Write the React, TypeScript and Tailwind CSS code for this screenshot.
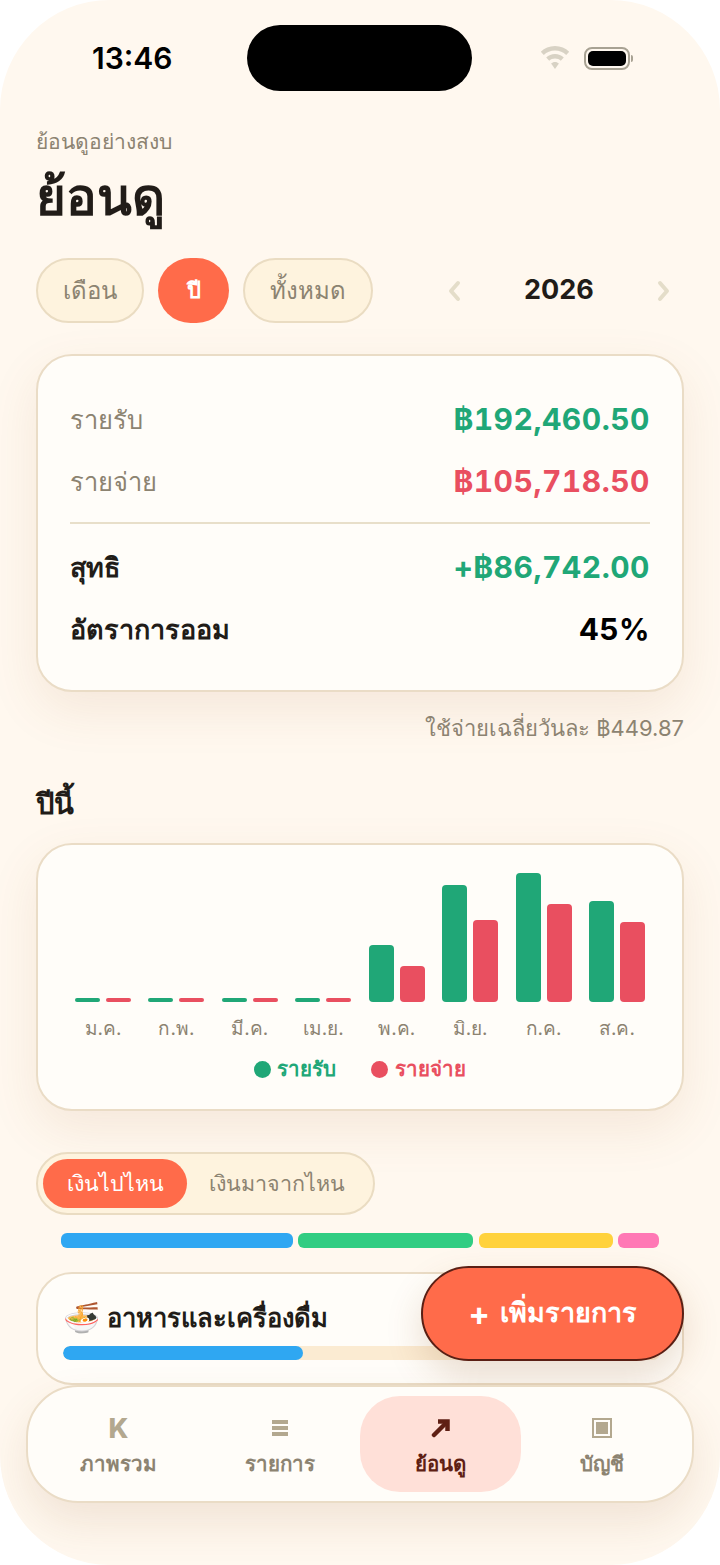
const months = [
  { label: 'ม.ค.', income: 4, expense: 4 },
  { label: 'ก.พ.', income: 4, expense: 4 },
  { label: 'มี.ค.', income: 4, expense: 4 },
  { label: 'เม.ย.', income: 4, expense: 4 },
  { label: 'พ.ค.', income: 57, expense: 36 },
  { label: 'มิ.ย.', income: 117, expense: 82 },
  { label: 'ก.ค.', income: 129, expense: 98 },
  { label: 'ส.ค.', income: 101, expense: 80 },
]

function StatusBar() {
  return (
    <div className="flex h-[131px] items-start justify-between pl-[92px] pr-[87px] pt-[25px]">
      <span className="mt-[15px] text-[30px] leading-[36px] font-semibold text-black">13:46</span>
      <div className="ml-[7px] h-[66px] w-[225px] rounded-[33px] bg-black" />
      <div className="mt-[21px] flex items-center gap-[14px]">
        <svg width="30" height="24" viewBox="0 0 30 24" fill="#d8d2c4">
          <path d="M15 0C9.4 0 4.4 2.2.8 5.7l3 3.2C6.700 6.100 10.600 4.400 15 4.400s8.300 1.700 11.200 4.500l3-3.200C25.600 2.200 20.600 0 15 0z" />
          <path d="M15 8c-3.400 0-6.500 1.300-8.800 3.500l3 3.200C10.700 13.300 12.700 12.400 15 12.400s4.300.9 5.800 2.300l3-3.200C21.500 9.300 18.400 8 15 8z" />
          <path d="M15 16c-1.500 0-2.900.6-3.900 1.600L15 23l3.900-5.400C17.900 16.600 16.500 16 15 16z" />
        </svg>
        <div className="flex items-center gap-[1px]">
          <div className="flex h-[23px] w-[46px] items-center justify-center rounded-[8px] border-2 border-[#a8a293]">
            <div className="h-[15px] w-[38px] rounded-[5px] bg-black" />
          </div>
          <div className="h-[7px] w-[2px] rounded-r-sm bg-[#a8a293]" />
        </div>
      </div>
    </div>
  )
}

function Chip({ label, active }: { label: string; active?: boolean }) {
  return (
    <div
      className={
        active
          ? 'flex h-[65px] w-[71px] items-center justify-center rounded-[33px] bg-[#ff6b4a] text-[22px] font-semibold text-white'
          : 'flex h-[65px] items-center rounded-[33px] border-2 border-[#eadcc2] bg-[#fef3de] px-[25px] text-[24px] font-medium text-[#8c8371]'
      }
    >
      {label}
    </div>
  )
}

function SummaryRow({ label, value, color, strong }: { label: string; value: string; color: string; strong?: boolean }) {
  return (
    <div className="flex h-[62px] items-center justify-between">
      <span className={strong ? 'text-[27px] font-semibold text-[#211c18]' : 'text-[25.500px] text-[#8c8371]'}>{label}</span>
      <span className={`mb-[2px] text-[30px] font-bold tracking-[0.5px] tabular-nums ${color}`}>{value}</span>
    </div>
  )
}

function NavItem({ label, active, children }: { label: string; active?: boolean; children: React.ReactNode }) {
  return (
    <div
      className={
        active
          ? 'flex h-[96px] w-[161px] flex-col items-center rounded-[40px] bg-[#ffe0d8] pt-[18px] text-[#5f1f14]'
          : 'flex h-[96px] w-[161px] flex-col items-center pt-[18px] text-[#8c8371]'
      }
    >
      <div className="flex h-[28px] items-center justify-center">{children}</div>
      <span className="mt-[6px] text-[20.500px] leading-[32px] font-semibold">{label}</span>
    </div>
  )
}

export default function App() {
  return (
    <div className="relative h-[1565px] w-[720px] overflow-hidden rounded-[110px] bg-[#fff8ef] font-['Inter','Noto_Sans','Liberation_Sans',sans-serif]">
      <StatusBar />

      <main className="px-[36px]">
        <p className="mt-[-3px] text-[21px] leading-[28px] text-[#8c8371]">ย้อนดูอย่างสงบ</p>
        <h1 className="mt-[9px] text-[51px] leading-[64px] font-bold text-[#211c18]">ย้อนดู</h1>

        <div className="mt-[29px] flex items-center">
          <div className="flex gap-[14px]">
            <Chip label="เดือน" />
            <Chip label="ปี" active />
            <Chip label="ทั้งหมด" />
          </div>
          <div className="ml-[73px] flex w-[226px] items-center justify-between">
            <svg width="16" height="22" viewBox="0 0 16 22" fill="none" stroke="#e4ddc9" strokeWidth="4" strokeLinecap="round" strokeLinejoin="round">
              <path d="M12 3 5 11l7 8" />
            </svg>
            <span className="text-[27px] font-bold text-[#211c18]">2026</span>
            <svg width="16" height="22" viewBox="0 0 16 22" fill="none" stroke="#e4ddc9" strokeWidth="4" strokeLinecap="round" strokeLinejoin="round">
              <path d="m4 3 7 8-7 8" />
            </svg>
          </div>
        </div>

        <section className="mt-[31px] h-[338px] rounded-[36px] border-2 border-[#eadcc6] bg-[#fffdf9] px-[32px] pt-[33px] shadow-[0_18px_50px_rgba(160,90,40,0.10)]">
          <SummaryRow label="รายรับ" value="฿192,460.50" color="text-[#20a777]" />
          <SummaryRow label="รายจ่าย" value="฿105,718.50" color="text-[#e94f60]" />
          <div className="mt-[9px] h-[2px] bg-[#e8dfca]" />
          <div className="mt-[13px]">
            <SummaryRow label="สุทธิ" value="+฿86,742.00" color="text-[#20a777]" strong />
            <SummaryRow label="อัตราการออม" value="45%" color="text-black" strong />
          </div>
        </section>

        <p className="mt-[20px] text-right text-[22px] leading-[32px] text-[#8c8371]">ใช้จ่ายเฉลี่ยวันละ ฿449.87</p>

        <h2 className="mt-[40px] text-[29px] leading-[40px] font-semibold text-[#211c18]">ปีนี้</h2>

        <section className="mt-[19px] h-[268px] rounded-[36px] border-2 border-[#eadcc6] bg-[#fffdf9] px-[37px] shadow-[0_18px_50px_rgba(160,90,40,0.10)]">
          <div className="flex h-[157px] items-end justify-between">
            {months.map((m) => (
              <div key={m.label} className="flex w-[56px] items-end justify-between">
                <div className="w-[25px] rounded-[4px] bg-[#20a777]" style={{ height: m.income }} />
                <div className="w-[25px] rounded-[4px] bg-[#e94f60]" style={{ height: m.expense }} />
              </div>
            ))}
          </div>
          <div className="mt-[13px] flex justify-between">
            {months.map((m) => (
              <span key={m.label} className="w-[56px] text-center text-[19px] leading-[28px] whitespace-nowrap text-[#8c8371]">{m.label}</span>
            ))}
          </div>
          <div className="mt-[11px] flex justify-center gap-[35px] text-[20.500px] leading-[30px] font-semibold">
            <div className="flex items-center gap-[6px] text-[#20a777]">
              <span className="size-[17px] rounded-full bg-[#20a777]" />
              รายรับ
            </div>
            <div className="flex items-center gap-[7px] text-[#e94f60]">
              <span className="size-[17px] rounded-full bg-[#e94f60]" />
              รายจ่าย
            </div>
          </div>
        </section>

        <div className="mt-[41px] flex h-[63px] w-[339px] items-center rounded-[32px] border-2 border-[#eadcc2] bg-[#fef3de] pl-[5px] text-[21.500px] font-medium">
          <div className="flex h-[49px] w-[144px] items-center justify-center rounded-[25px] bg-[#ff6b4a] text-white">เงินไปไหน</div>
          <div className="ml-[22px] text-[#8c8371]">เงินมาจากไหน</div>
        </div>

        <div className="mt-[18px] flex gap-[5.500px] px-[25px]">
          <div className="h-[15px] w-[232px] rounded-[6px] bg-[#2fa7f2]" />
          <div className="h-[15px] w-[175px] rounded-[6px] bg-[#31cd82]" />
          <div className="h-[15px] w-[134px] rounded-[6px] bg-[#ffd23c]" />
          <div className="h-[15px] w-[41px] rounded-[6px] bg-[#ff78b5]" />
        </div>

        <section className="mt-[24px] h-[113px] rounded-[36px] border-2 border-[#eadcc6] bg-[#fffdf9] px-[25px] pt-[24px]">
          <div className="flex items-center gap-[7px] text-[25.500px] leading-[40px] font-semibold text-[#211c18]">
            <span className="font-['Noto_Color_Emoji',sans-serif] text-[30px]">🍜</span>
            อาหารและเครื่องดื่ม
          </div>
          <div className="mt-[8px] h-[14px] w-[597px] overflow-hidden rounded-[7px] bg-[#fbebd2]">
            <div className="h-full w-[240px] rounded-[7px] bg-[#2fa7f2]" />
          </div>
        </section>
      </main>

      {/* floating add button */}
      <button className="absolute top-[1266px] left-[421px] flex h-[95px] w-[263px] items-center justify-center gap-[10px] rounded-[48px] border-2 border-[#5a1f14] bg-[#ff6b4a] text-[27px] font-semibold text-white shadow-[0_16px_36px_rgba(140,80,30,0.18)]">
        <span className="text-[32px] font-bold">+</span> เพิ่มรายการ
      </button>

      {/* bottom nav */}
      <nav className="absolute top-[1385px] left-[26px] flex h-[118px] w-[668px] items-center justify-between rounded-[52px] border-2 border-[#eadcc6] bg-[#fffdf9] px-[10px] shadow-[0_20px_44px_rgba(140,80,30,0.12)]">
        <NavItem label="ภาพรวม">
          <span className="text-[27px] leading-none font-extrabold text-[#b3a88f]">K</span>
        </NavItem>
        <NavItem label="รายการ">
          <div className="flex w-[16px] flex-col gap-[2px]">
            <div className="h-[4px] bg-[#b3a88f]" />
            <div className="h-[4px] bg-[#b3a88f]" />
            <div className="h-[4px] bg-[#b3a88f]" />
          </div>
        </NavItem>
        <NavItem label="ย้อนดู" active>
          <svg width="20" height="20" viewBox="0 0 20 20" fill="none" stroke="#5f1f14" strokeWidth="4.500" strokeLinecap="round">
            <path d="M3 17 15 5" />
            <path d="M7 3.500h9.500V13" strokeLinecap="butt" />
          </svg>
        </NavItem>
        <NavItem label="บัญชี">
          <div className="flex size-[20px] items-center justify-center border-2 border-[#b3a88f]">
            <div className="size-[12px] bg-[#b3a88f]" />
          </div>
        </NavItem>
      </nav>
    </div>
  )
}
